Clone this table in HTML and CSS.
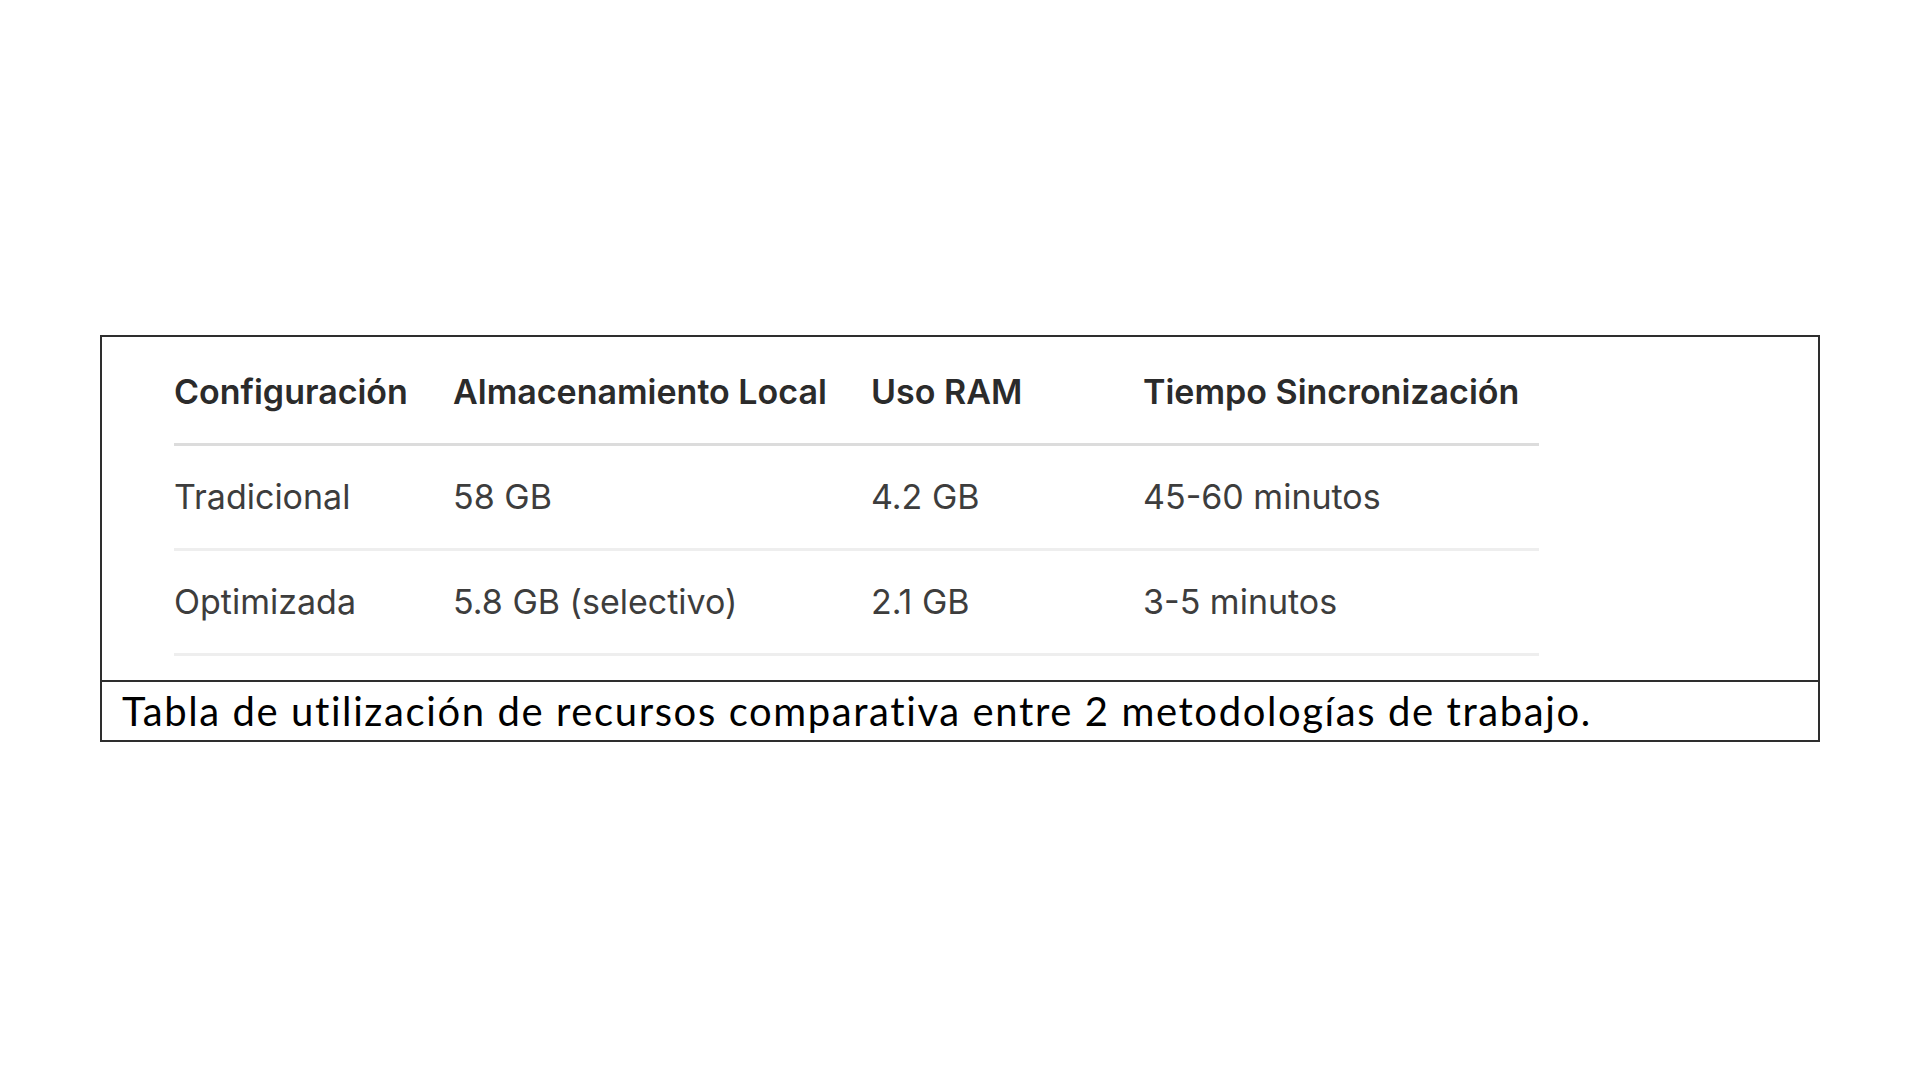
FILE: index.html
```html
<!DOCTYPE html>
<html lang="es">
<head>
<meta charset="utf-8">
<title>Tabla de utilización de recursos</title>
<link rel="stylesheet" href="styles.css">
</head>
<body>
<div class="page">
  <figure class="figure">
    <div class="table-area">
      <table class="data">
        <colgroup>
          <col class="c1"><col class="c2"><col class="c3"><col class="c4">
        </colgroup>
        <thead>
          <tr>
            <th>Configuración</th>
            <th>Almacenamiento Local</th>
            <th>Uso RAM</th>
            <th>Tiempo Sincronización</th>
          </tr>
        </thead>
        <tbody>
          <tr>
            <td>Tradicional</td>
            <td>58 GB</td>
            <td>4.2 GB</td>
            <td>45-60 minutos</td>
          </tr>
          <tr>
            <td>Optimizada</td>
            <td>5.8 GB (selectivo)</td>
            <td>2.1 GB</td>
            <td>3-5 minutos</td>
          </tr>
        </tbody>
      </table>
    </div>
    <figcaption class="caption">Tabla de utilización de recursos comparativa entre 2 metodologías de trabajo.</figcaption>
  </figure>
</div>
</body>
</html>
```

FILE: styles.css
```css
html, body {
  margin: 0;
  padding: 0;
  background: #ffffff;
}

.page {
  width: 1920px;
  height: 1080px;
  box-sizing: border-box;
  padding-bottom: 4px;
  display: flex;
  align-items: center;
  justify-content: center;
}

.figure {
  margin: 0;
  width: 1720px;
  box-sizing: border-box;
  border: 2px solid #2e2e2e;
  background: #ffffff;
}

.table-area {
  padding: 4px 0 24px 72px;
}

.data {
  border-collapse: collapse;
  width: 1365px;
  font-family: Inter, "Noto Sans", sans-serif;
  font-size: 34px;
  text-align: left;
}

.c1 { width: 279px; }
.c2 { width: 418px; }
.c3 { width: 272px; }
.c4 { width: 396px; }

.data th,
.data td {
  padding: 0;
  height: 102px;
  vertical-align: middle;
  white-space: nowrap;
}

.data th {
  font-weight: 600;
  color: #2b2b2b;
  border-bottom: 3px solid #dcdcdc;
}

.data td {
  font-weight: 400;
  color: #3d3d3d;
  border-bottom: 3px solid #eeeeee;
}

.caption {
  border-top: 2px solid #2e2e2e;
  height: 58px;
  line-height: 58px;
  padding-left: 20px;
  font-family: Lato, "Open Sans", sans-serif;
  font-size: 40px;
  letter-spacing: 1.6px;
  color: #000000;
  white-space: nowrap;
}
```
